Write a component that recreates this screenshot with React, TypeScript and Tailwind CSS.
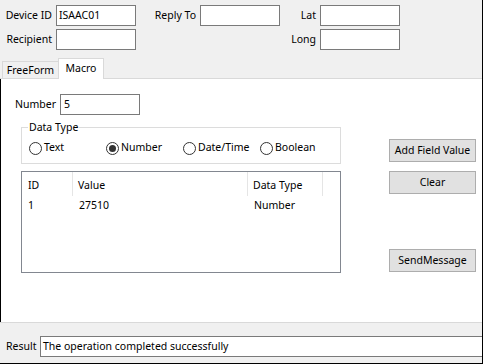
import React from "react";

const FONT = { fontFamily: '"Noto Sans", "Open Sans", sans-serif' };

function TextBox({ value = "", className = "" }: { value?: string; className?: string }) {
    return (
        <div className={`h-[21px] w-[80px] bg-white border border-[#7a7a7a] pl-[2px] leading-[19px] ${className}`}>
            {value}
        </div>
    );
}

function Radio({ label, checked = false }: { label: string; checked?: boolean }) {
    return (
        <div className="w-[77px] flex items-center">
            <span className="w-[13px] h-[13px] rounded-full border border-[#333] flex items-center justify-center flex-shrink-0">
                {checked && <span className="w-[7px] h-[7px] rounded-full bg-[#333]" />}
            </span>
            <span className="ml-[2px]">{label}</span>
        </div>
    );
}

function Button({ label, className = "" }: { label: string; className?: string }) {
    return (
        <div className={`w-[87px] h-[23px] bg-[#e1e1e1] border border-[#adadad] flex items-center justify-center ${className}`}>
            {label}
        </div>
    );
}

export default function App() {
    return (
        <div
            style={FONT}
            className="w-[483px] h-[364px] flex flex-col border-r border-b border-black text-[10.5px] text-black bg-[#f0f0f0] overflow-hidden whitespace-nowrap"
        >
            {/* header fields */}
            <div className="h-[79px] flex flex-col pt-[5px]">
                <div className="flex items-center h-[21px]">
                    <span className="w-[56px] text-right pr-[4px]">Device ID</span>
                    <TextBox value="ISAAC01" />
                    <span className="w-[64px] text-right pr-[4px]">Reply To</span>
                    <TextBox />
                    <span className="w-[40px] text-right pr-[4px]">Lat</span>
                    <TextBox />
                </div>
                <div className="flex items-center h-[21px] mt-[3px]">
                    <span className="w-[56px] text-right pr-[4px]">Recipient</span>
                    <TextBox />
                    <span className="w-[144px]" />
                    <span className="w-[40px] text-right pr-[4px]">Long</span>
                    <TextBox />
                </div>
                <div className="mt-auto h-[21px] flex items-end border-b border-[#d9d9d9]">
                    <div className="ml-[2px] w-[56px] h-[17px] border-l border-t border-[#d9d9d9] flex items-center justify-center leading-none">
                        FreeForm
                    </div>
                    <div className="w-[46px] h-[21px] -mb-px bg-white border-l border-t border-r border-[#d9d9d9] flex items-start justify-center pt-[2px] leading-[14px]">
                        Macro
                    </div>
                </div>
            </div>

            {/* tab page */}
            <div className="flex-1 bg-white border-l border-black flex">
                <div className="w-[340px] flex flex-col">
                    <div className="flex items-center h-[21px] mt-[15px]">
                        <span className="w-[59px] text-right pr-[4px]">Number</span>
                        <TextBox value="5" className="pl-[3px]" />
                    </div>
                    <div className="relative ml-[20px] mt-[12px] w-[320px] h-[37px] border border-[#dcdcdc]">
                        <span className="absolute left-[6px] -top-[8px] bg-white px-px leading-[14px]">Data Type</span>
                        <div className="flex items-center pl-[7px] mt-[13px] h-[14px]">
                            <Radio label="Text" />
                            <Radio label="Number" checked />
                            <Radio label="Date/Time" />
                            <Radio label="Boolean" />
                        </div>
                    </div>
                    <div className="ml-[20px] mt-[7px] w-[320px] h-[102px] border border-[#828790]">
                        <div className="flex h-[24px]">
                            <div className="w-[51px] border-r border-[#e5e5e5] pl-[6px] leading-[26px]">ID</div>
                            <div className="w-[175px] border-r border-[#e5e5e5] pl-[5px] leading-[26px]">Value</div>
                            <div className="w-[75px] border-r border-[#e5e5e5] pl-[5px] leading-[26px]">Data Type</div>
                        </div>
                        <div className="flex h-[20px] items-center">
                            <div className="w-[51px] pl-[6px]">1</div>
                            <div className="w-[175px] pl-[6px]">27510</div>
                            <div className="w-[75px] pl-[6px]">Number</div>
                        </div>
                    </div>
                </div>
                <div className="ml-[48px] flex flex-col">
                    <Button label="Add Field Value" className="mt-[60px]" />
                    <Button label="Clear" className="mt-[9px]" />
                    <Button label="SendMessage" className="mt-[55px]" />
                </div>
            </div>

            {/* result */}
            <div className="h-[41px] border-t border-[#d9d9d9] pt-[13px]">
                <div className="flex items-center h-[21px]">
                    <span className="w-[40px] pl-[6px]">Result</span>
                    <div className="flex-1 h-[21px] bg-white border-l border-t border-b border-[#7a7a7a] pl-[2px] leading-[19px]">
                        The operation completed successfully
                    </div>
                </div>
            </div>
        </div>
    );
}
